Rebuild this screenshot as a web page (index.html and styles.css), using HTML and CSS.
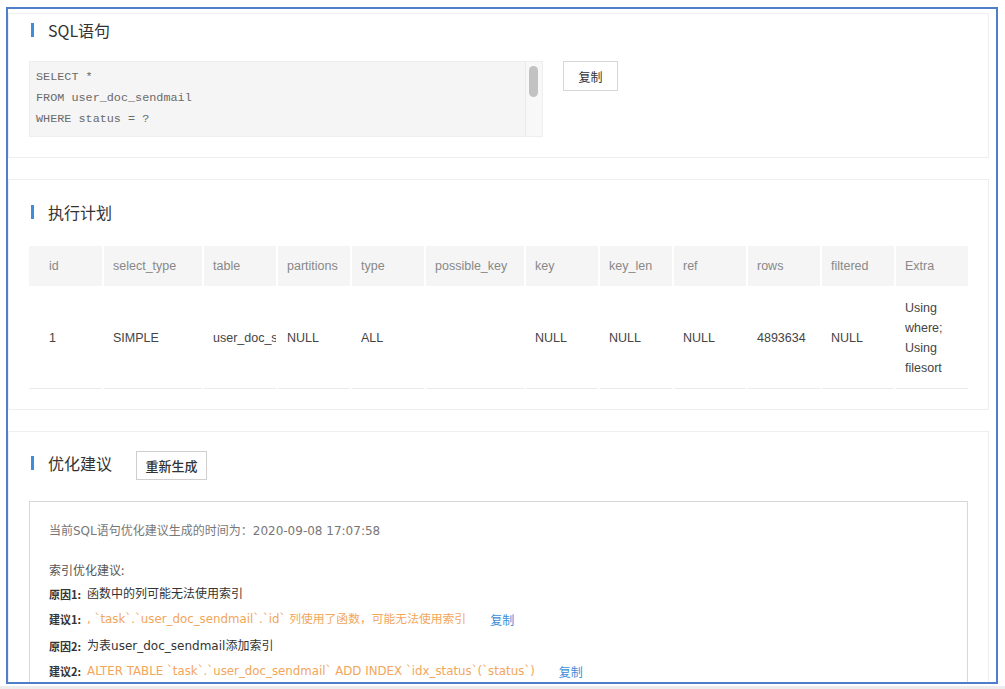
FILE: index.html
```html
<!DOCTYPE html>
<html lang="zh-CN">
<head>
<meta charset="utf-8">
<title>SQL优化</title>
<link rel="stylesheet" href="styles.css">
</head>
<body>
<div class="page">
  <div class="frame">
    <section class="card card-sql">
      <h2 class="title"><span class="bar"></span>SQL语句</h2>
      <div class="sql-row">
        <div class="code-box">
          <pre class="code">SELECT *
FROM user_doc_sendmail
WHERE status = ?</pre>
          <div class="scroll-track"><div class="scroll-thumb"></div></div>
        </div>
        <button class="btn btn-copy">复制</button>
      </div>
    </section>

    <section class="card card-plan">
      <h2 class="title"><span class="bar"></span>执行计划</h2>
      <table class="plan">
        <colgroup>
          <col class="c-id"><col class="c-wide"><col class="c-n"><col class="c-n"><col class="c-n"><col class="c-wide"><col class="c-n"><col class="c-n"><col class="c-n"><col class="c-n"><col class="c-n"><col>
        </colgroup>
        <thead>
          <tr>
            <th>id</th><th>select_type</th><th>table</th><th>partitions</th><th>type</th><th>possible_key</th><th>key</th><th>key_len</th><th>ref</th><th>rows</th><th>filtered</th><th>Extra</th>
          </tr>
        </thead>
        <tbody>
          <tr>
            <td>1</td><td>SIMPLE</td><td class="clip"><span class="clip-in">user_doc_sendmail</span></td><td>NULL</td><td>ALL</td><td></td><td>NULL</td><td>NULL</td><td>NULL</td><td>4893634</td><td>NULL</td><td>Using where; Using filesort</td>
          </tr>
        </tbody>
      </table>
    </section>

    <section class="card card-advice">
      <div class="title-row">
        <h2 class="title"><span class="bar"></span>优化建议</h2>
        <button class="btn btn-regen">重新生成</button>
      </div>
      <div class="advice-box">
        <p class="time">当前SQL语句优化建议生成的时间为：2020-09-08 17:07:58</p>
        <p class="sub">索引优化建议:</p>
        <div class="group">
          <p class="line"><span class="label">原因1:</span><span class="val">函数中的列可能无法使用索引</span></p>
          <p class="line"><span class="label">建议1:</span><span class="sugg">, `task`.`user_doc_sendmail`.`id` 列使用了函数，可能无法使用索引</span><a class="link">复制</a></p>
        </div>
        <div class="group">
          <p class="line"><span class="label">原因2:</span><span class="val">为表user_doc_sendmail添加索引</span></p>
          <p class="line"><span class="label">建议2:</span><span class="sugg">ALTER TABLE `task`.`user_doc_sendmail` ADD INDEX `idx_status`(`status`)</span><a class="link">复制</a></p>
        </div>
      </div>
    </section>
  </div>
  <div class="under"></div>
</div>
</body>
</html>
```
FILE: styles.css
```css
* { box-sizing: border-box; }
html, body { margin: 0; padding: 0; background: #fff; }
body {
  font-family: "Liberation Sans", "Noto Sans CJK SC", sans-serif;
  color: #333;
  overflow: hidden;
}
.page { padding: 7px 0 0 6px; }
.frame {
  width: 992px;
  height: 677px;
  border: 2px solid #4f7fc8;
  padding: 4px 0 0 0;
  overflow: hidden;
  background: #fff;
}
.under { height: 10px; margin-top: 2px; margin-left: -6px; background: #ececec; }

.card {
  width: 981px;
  border: 1px solid #eeeeee;
  background: #fff;
  padding: 0 20px;
}
.card + .card { margin-top: 21px; }
.card-sql { padding-top: 4px; padding-bottom: 20px; }
.card-plan { padding-top: 20px; padding-bottom: 20px; }
.card-advice { padding-top: 19px; }

.title {
  margin: 0 0 0 2px;
  display: flex;
  align-items: center;
  height: 24px;
  font-family: "Noto Sans CJK SC", sans-serif;
  font-size: 16px;
  font-weight: 400;
  color: #333;
}
.bar { width: 3px; height: 14px; background: #3d8ddb; margin-right: 14px; }

.sql-row { display: flex; align-items: flex-start; margin-top: 19px; }
.code-box {
  width: 514px;
  height: 76px;
  display: flex;
  background: #f5f5f5;
  border: 1px solid #eeeeee;
}
.code {
  flex: 1;
  margin: 0;
  padding: 5px 6px 4px;
  font-family: "Liberation Mono", monospace;
  font-size: 11.8px;
  line-height: 21px;
  color: #6a6a6a;
}
.scroll-track {
  width: 17px;
  background: #f8f8f8;
  border-left: 1px solid #e8e8e8;
  padding: 4px 0 0 3px;
}
.scroll-thumb { width: 9px; height: 31px; border-radius: 5px; background: #c2c2c2; }

.btn {
  font-family: "Noto Sans CJK SC", sans-serif;
  background: #fff;
  border: 1px solid #d6d6d6;
  color: #333;
  padding: 0;
  cursor: pointer;
}
.btn-copy { width: 55px; height: 30px; margin-left: 20px; font-size: 12px; }

.plan {
  margin-top: 22px;
  width: 939px;
  table-layout: fixed;
  border-collapse: collapse;
  font-size: 12.5px;
}
.c-id { width: 74px; }
.c-wide { width: 100px; }
.c-n { width: 74px; }
.plan th {
  height: 40px;
  background: #f5f5f5;
  color: #888;
  font-weight: 400;
  text-align: left;
  padding: 0 8px 0 9px;
  border-left: 2px solid #fff;
  white-space: nowrap;
  overflow: hidden;
}
.plan td {
  height: 101px;
  padding: 12px 8px 10px 9px;
  border-left: 2px solid transparent;
  border-bottom: 1px solid #eaeaea;
  color: #444;
  line-height: 20px;
  overflow: hidden;
}
.plan th:first-child, .plan td:first-child { padding-left: 20px; border-left: 0; }
.plan td.clip { white-space: nowrap; padding-right: 0; }
.clip-in { display: block; width: 63px; overflow: hidden; }

.title-row { display: flex; align-items: flex-start; }
.btn-regen { width: 71px; height: 29px; margin-left: 24px; font-size: 13px; font-weight: 500; border-color: #cfcfcf; }

.advice-box {
  margin-top: 21px;
  border: 1px solid #d8d8d8;
  padding: 17px 19px 20px;
  height: 220px;
  font-family: "DejaVu Sans", "Noto Sans CJK SC", sans-serif;
  font-size: 12px;
}
.advice-box p { margin: 0; line-height: 25px; white-space: nowrap; }
.time { color: #777; }
.sub { margin-top: 13px !important; color: #555; font-family: "Noto Sans CJK SC", sans-serif; }
.group + .group { margin-top: 2px; }
.line { display: flex; }
.label {
  flex: none;
  margin-right: 6px;
  white-space: nowrap;
  font-family: "Noto Sans CJK SC", sans-serif;
  font-size: 11px;
  font-weight: 700;
  color: #333;
}
.val { color: #333; }
.sugg { color: #f2a65a; font-size: 11.8px; }
.link { color: #3d8ddb; margin-left: 24px; cursor: pointer; font-family: "Noto Sans CJK SC", sans-serif; }
```
